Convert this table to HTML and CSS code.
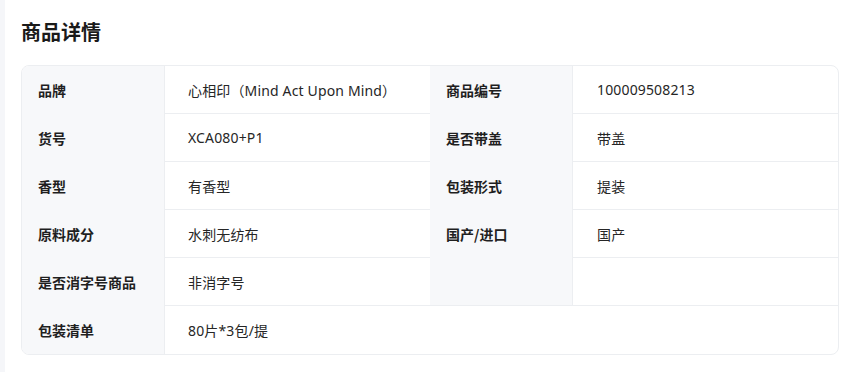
FILE: index.html
```html
<!DOCTYPE html>
<html lang="zh-CN">
<head>
<meta charset="utf-8">
<title>商品详情</title>
<link rel="stylesheet" href="styles.css">
</head>
<body>
<main class="page">
  <h2 class="title">商品详情</h2>
  <div class="specs">
    <div class="lbl">品牌</div><div class="val">心相印（Mind Act Upon Mind）</div>
    <div class="lbl">商品编号</div><div class="val">100009508213</div>

    <div class="lbl">货号</div><div class="val">XCA080+P1</div>
    <div class="lbl">是否带盖</div><div class="val">带盖</div>

    <div class="lbl">香型</div><div class="val">有香型</div>
    <div class="lbl">包装形式</div><div class="val">提装</div>

    <div class="lbl">原料成分</div><div class="val">水刺无纺布</div>
    <div class="lbl">国产/进口</div><div class="val">国产</div>

    <div class="lbl">是否消字号商品</div><div class="val">非消字号</div>
    <div class="lbl lined"></div><div class="val"></div>

    <div class="lbl">包装清单</div><div class="val wide">80片*3包/提</div>
  </div>
</main>
</body>
</html>
```

FILE: styles.css
```css
html, body {
  margin: 0;
  padding: 0;
}
body {
  background: #f5f6f9;
  font-family: "Noto Sans", "Noto Sans CJK SC", sans-serif;
  color: #1f1f1f;
}
.page {
  margin-left: 5px;
  background: #ffffff;
  height: 372px;
  padding: 18px 7px 0 16px;
  box-sizing: border-box;
}
.title {
  margin: 0;
  font-size: 20px;
  line-height: 28px;
  font-weight: 700;
  color: #1a1a1a;
  font-family: "Noto Sans CJK SC", sans-serif;
}
.specs {
  margin-top: 19px;
  display: grid;
  grid-template-columns: 143px 265px 143px 265px;
  border: 1px solid #eceef1;
  border-radius: 8px;
  overflow: hidden;
  width: 816px;
}
.lbl {
  box-sizing: border-box;
  background: #f7f8fa;
  border-right: 1px solid #eceef1;
  height: 48px;
  display: flex;
  align-items: center;
  padding-left: 16px;
  font-size: 14px;
  font-weight: 700;
  color: #1f1f1f;
  font-family: "Noto Sans CJK SC", sans-serif;
}
.lbl.lined {
  border-bottom: 1px solid #eceef1;
}
.val {
  height: 48px;
  box-sizing: border-box;
  border-bottom: 1px solid #eceef1;
  display: flex;
  align-items: center;
  padding-left: 23px;
  font-size: 14px;
  letter-spacing: 0.15px;
  color: #262626;
  font-family: "Noto Sans", "Noto Sans CJK SC", sans-serif;
}
.val:nth-child(4n) {
  padding-left: 24px;
}
.val.wide {
  grid-column: 2 / 5;
  border-bottom: none;
}
```
